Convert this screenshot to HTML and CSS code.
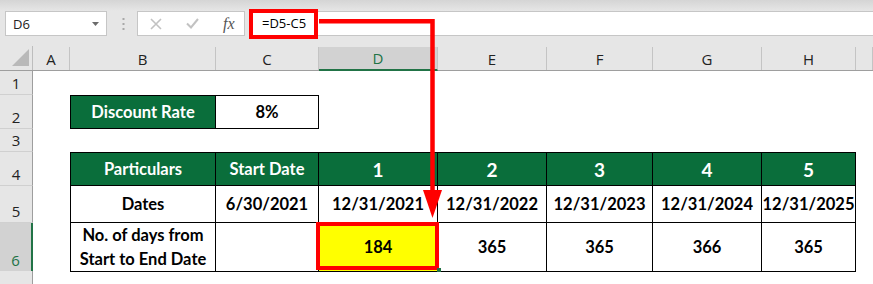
FILE: index.html
```html
<!DOCTYPE html>
<html lang="en">
    <head>
        <meta charset="UTF-8" />
        <meta name="viewport" content="width=device-width, initial-scale=1.0" />
        <title>Days Between Dates</title>
        <link rel="stylesheet" href="styles.css">
    </head>
    <body>
        <div class="toolbar">
            <div class="formula-row">
                <div class="name-box">
                    <span>D6</span>
                    <svg class="caret" width="7" height="4" viewBox="0 0 7 4"><path d="M0 0H7L3.5 4Z" fill="#6b6b6b"/></svg>
                </div>
                <svg class="grip" width="3" height="12" viewBox="0 0 3 12">
                    <rect x="0.5" y="0" width="2" height="2" fill="#a8a8a8"/>
                    <rect x="0.5" y="5" width="2" height="2" fill="#a8a8a8"/>
                    <rect x="0.5" y="10" width="2" height="2" fill="#a8a8a8"/>
                </svg>
                <div class="fx-buttons">
                    <svg class="cancel" width="12" height="12" viewBox="0 0 12 12"><path d="M1 1L11 11M11 1L1 11" stroke="#c2c2c2" stroke-width="1.6"/></svg>
                    <svg class="enter" width="13" height="11" viewBox="0 0 13 11"><path d="M1 5.5L5 9.5L12 1" fill="none" stroke="#c2c2c2" stroke-width="2"/></svg>
                    <span class="fx">fx</span>
                </div>
                <div class="formula-input">=D5-C5</div>
            </div>
        </div>

        <div class="sheet">
            <div class="row head">
                <div class="corner">
                    <svg width="17" height="17" viewBox="0 0 17 17"><path d="M17 0V17H0Z" fill="#b9b9b9"/></svg>
                </div>
                <div class="ch">A</div>
                <div class="ch">B</div>
                <div class="ch">C</div>
                <div class="ch selected">D</div>
                <div class="ch">E</div>
                <div class="ch">F</div>
                <div class="ch">G</div>
                <div class="ch">H</div>
                <div class="ch"></div>
            </div>

            <div class="row r1">
                <div class="rh">1</div>
            </div>

            <div class="row r2">
                <div class="rh">2</div>
                <div></div>
                <div class="cell green left top">Discount Rate</div>
                <div class="cell top">8%</div>
            </div>

            <div class="row r3">
                <div class="rh">3</div>
            </div>

            <div class="row r4">
                <div class="rh">4</div>
                <div></div>
                <div class="cell green left top">Particulars</div>
                <div class="cell green top">Start Date</div>
                <div class="cell green top big">1</div>
                <div class="cell green top big">2</div>
                <div class="cell green top big">3</div>
                <div class="cell green top big">4</div>
                <div class="cell green top big">5</div>
            </div>

            <div class="row r5">
                <div class="rh">5</div>
                <div></div>
                <div class="cell left">Dates</div>
                <div class="cell">6/30/2021</div>
                <div class="cell">12/31/2021</div>
                <div class="cell">12/31/2022</div>
                <div class="cell">12/31/2023</div>
                <div class="cell">12/31/2024</div>
                <div class="cell">12/31/2025</div>
            </div>

            <div class="row r6">
                <div class="rh selected">6</div>
                <div></div>
                <div class="cell left two-line">No. of days from<br>Start to End Date</div>
                <div class="cell"></div>
                <div class="cell yellow">184</div>
                <div class="cell">365</div>
                <div class="cell">365</div>
                <div class="cell">366</div>
                <div class="cell">365</div>
            </div>

            <!-- row 7 is only partly on screen, its number is below the fold -->
            <div class="row r7">
                <div class="rh"></div>
            </div>
        </div>

        <!-- red callout: formula box, arrow and target cell -->
        <svg class="marks" width="873" height="284" viewBox="0 0 873 284">
            <rect x="251" y="11" width="65" height="26" fill="none" stroke="#ff0000" stroke-width="4"/>
            <path d="M319 21.2H432.5V193" fill="none" stroke="#ff0000" stroke-width="4.5"/>
            <path d="M423 190H442L432.5 218Z" fill="#ff0000"/>
            <rect x="318" y="224" width="119" height="44" fill="none" stroke="#ff0000" stroke-width="4"/>
            <rect x="437" y="268" width="4" height="4" fill="#217346"/>
        </svg>
    </body>
</html>
```

FILE: styles.css
```css
* {
    box-sizing: border-box;
}

body {
    margin: 0;
    width: 873px;
    height: 284px;
    overflow: hidden;
    position: relative;
    background: #ffffff;
    font-family: "Open Sans", "Noto Sans", sans-serif;
    color: #222222;
}

/* formula bar */
.toolbar {
    height: 46px;
    padding-top: 11px;
    background: linear-gradient(#d5d5d5, #e6e6e6 11px);
}

.formula-row {
    display: flex;
    height: 25px;
}

.name-box {
    margin-left: 5px;
    width: 102px;
    display: flex;
    align-items: center;
    justify-content: space-between;
    padding: 0 7px 0 7px;
    background: #ffffff;
    border: 1px solid #c6c6c6;
    font-size: 13px;
}

.grip {
    align-self: center;
    margin-left: 15px;
}

.fx-buttons {
    margin-left: 12px;
    width: 108px;
    display: flex;
    align-items: center;
    padding-left: 12px;
    background: #ffffff;
    border: 1px solid #c6c6c6;
}

.enter {
    margin-left: 24px;
}

.fx {
    margin-left: 24px;
    font-family: "Liberation Serif", serif;
    font-style: italic;
    font-size: 16px;
    color: #555555;
}

.formula-input {
    flex: 1;
    margin-left: 4px;
    padding-left: 12px;
    background: #ffffff;
    border: 1px solid #c6c6c6;
    border-right: none;
    font-size: 13px;
    line-height: 23px;
    color: #000000;
}

/* sheet */
.row {
    display: grid;
    grid-template-columns: 33px 37px 146px 103px 119px 109px 106px 109px 94px 17px;
}

.head {
    height: 25px;
    background: #e6e6e6;
    border-bottom: 1px solid #9e9e9e;
}

.corner {
    display: flex;
    align-items: flex-end;
    justify-content: flex-end;
    padding: 0 3px 4px 0;
    border-right: 1px solid #bdbdbd;
}

.ch {
    display: flex;
    align-items: center;
    justify-content: center;
    margin-top: 1px;
    border-right: 1px solid #c4c4c4;
    font-size: 15px;
}

.ch.selected {
    background: #d2d2d2;
    color: #217346;
    border-bottom: 2px solid #217346;
    margin-bottom: -1px;
}

.r1 { height: 24px; }
.r2 { height: 34px; }
.r3 { height: 23px; }
.r4 { height: 34px; }
.r5 { height: 37px; }
.r6 { height: 48px; }
.r7 { height: 20px; }

.rh {
    display: flex;
    align-items: flex-end;
    justify-content: center;
    padding-bottom: 1px;
    background: #e6e6e6;
    border-right: 1px solid #9e9e9e;
    border-bottom: 1px solid #d0d0d0;
    font-size: 15px;
    line-height: 20px;
}

.rh.selected {
    background: #d2d2d2;
    color: #217346;
    border-right: 2px solid #217346;
}

.cell {
    display: flex;
    align-items: center;
    justify-content: center;
    text-align: center;
    white-space: nowrap;
    border-right: 1px solid #000000;
    border-bottom: 1px solid #000000;
    font-family: Lato, "Liberation Sans", sans-serif;
    font-weight: 700;
    font-size: 16.5px;
    color: #000000;
}

.cell.left {
    border-left: 1px solid #000000;
}

.cell.top {
    border-top: 1px solid #000000;
}

.cell.green {
    background: #0a6e3b;
    color: #ffffff;
}

.cell.big {
    font-size: 19px;
}

.cell.yellow {
    background: #ffff00;
}

.two-line {
    line-height: 24px;
    white-space: normal;
}

.marks {
    position: absolute;
    top: 0;
    left: 0;
}
```
